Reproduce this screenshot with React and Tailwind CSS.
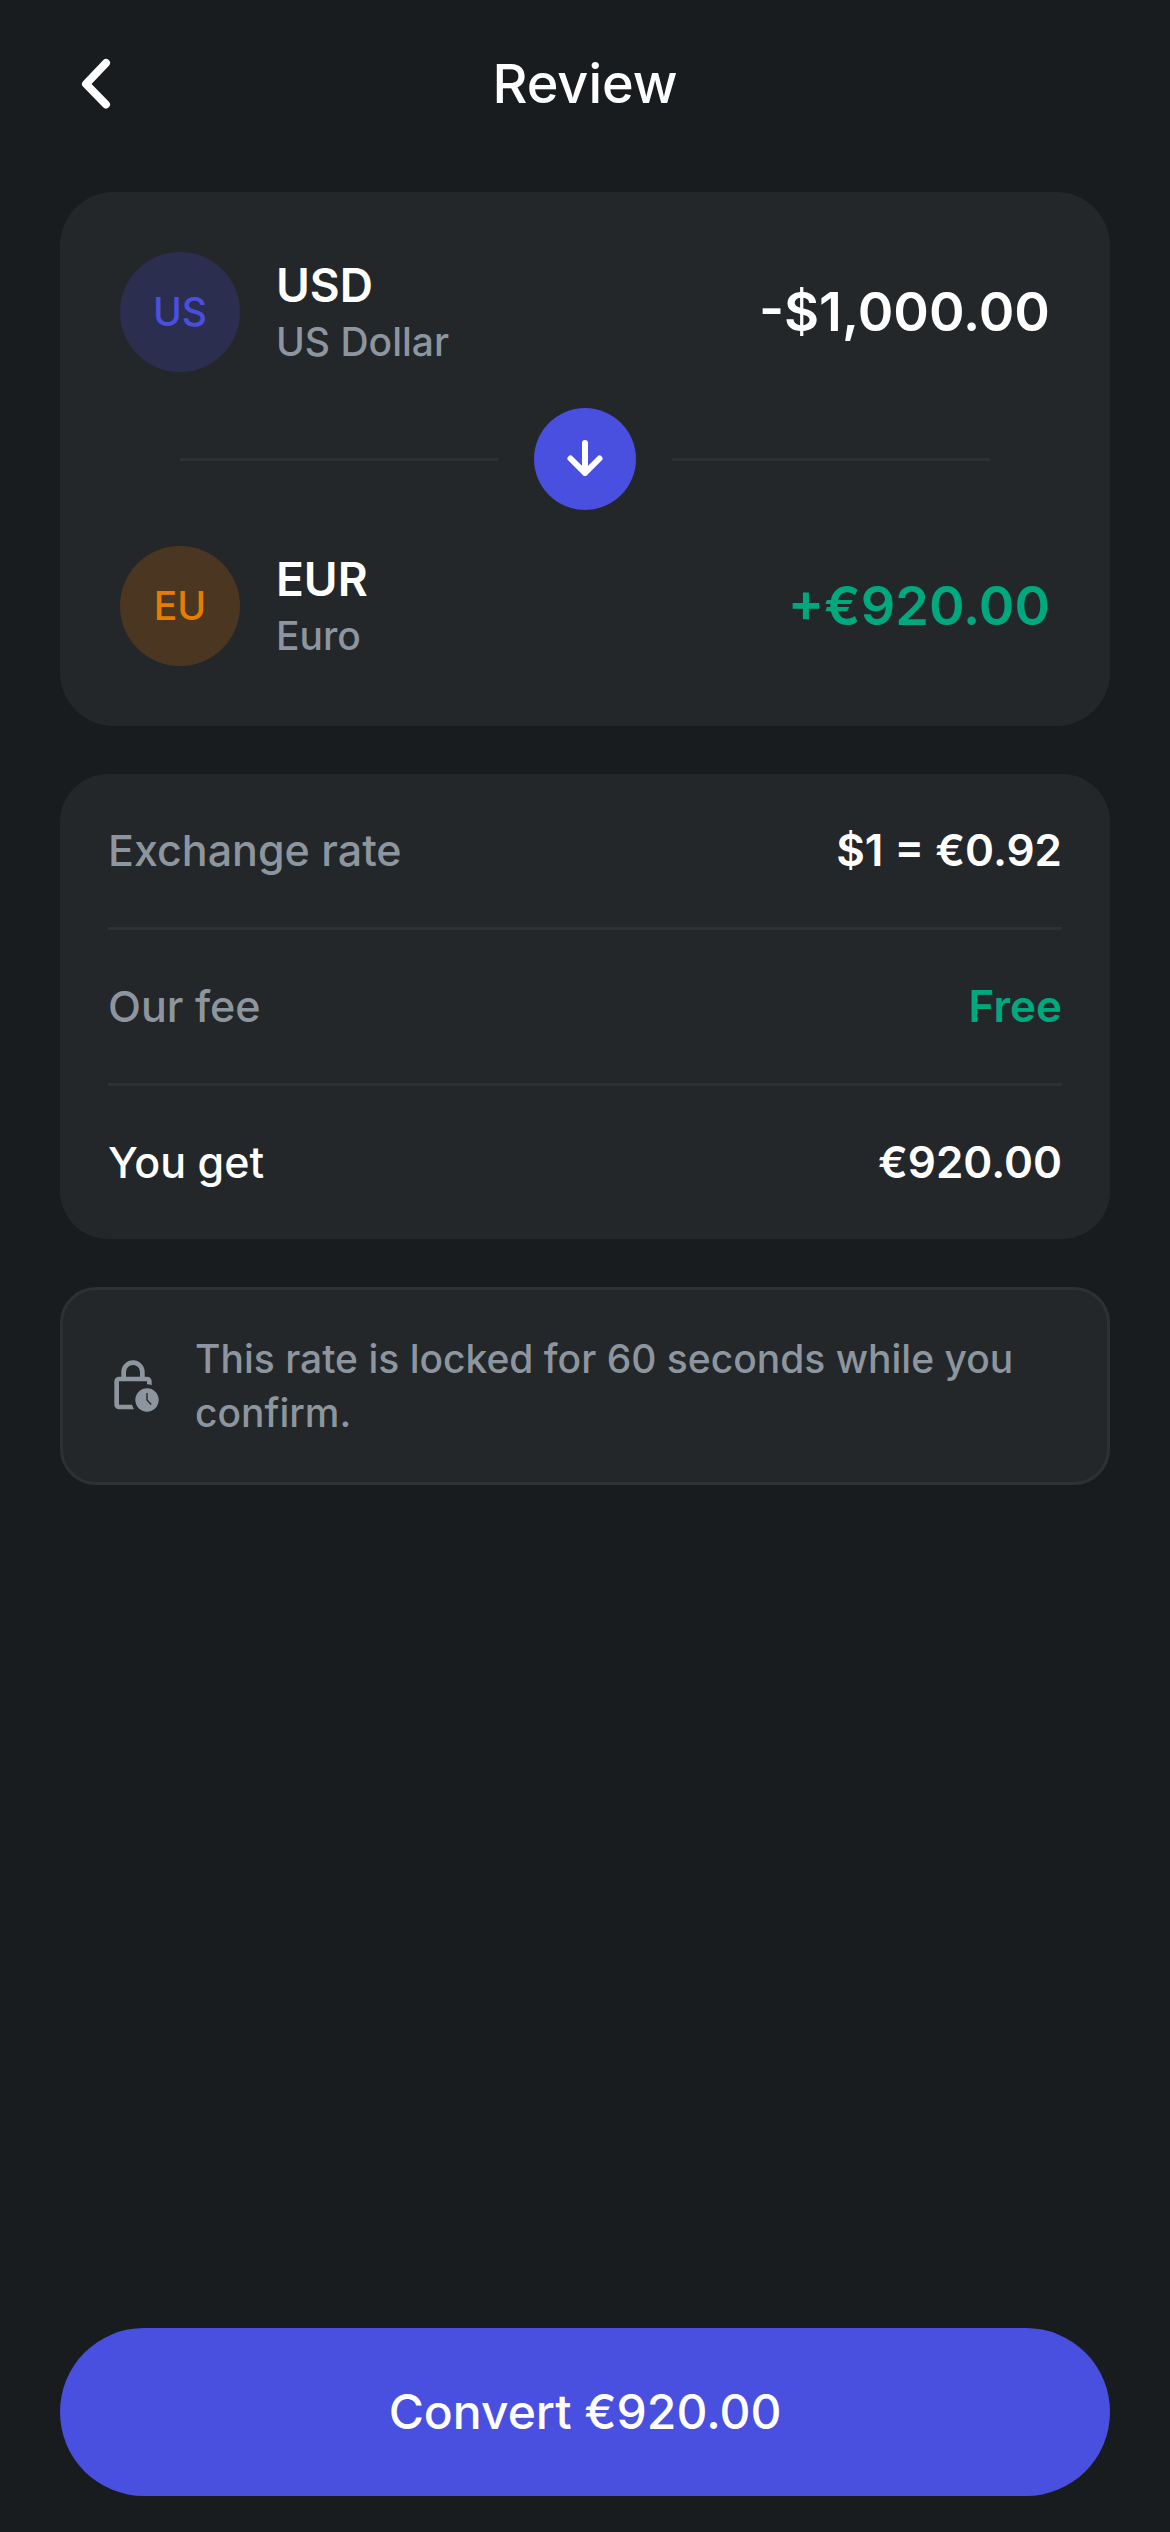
export default function App() {
  return (
    <div className="min-h-screen flex flex-col bg-[#191c1f] text-white font-medium px-[60px] pb-9 font-[Inter,sans-serif]">
      <header className="grid grid-cols-[72px_1fr_72px] items-center h-[168px]">
        <button type="button" aria-label="Back" className="size-[72px] flex items-center justify-center">
          <svg viewBox="0 0 72 72" className="size-[72px]" fill="none" stroke="currentColor" strokeWidth="8">
            <path d="M46 15 26 36l20 20.5" strokeLinecap="round" strokeLinejoin="round" />
          </svg>
        </button>
        <h1 className="text-center text-[54px] leading-[72px]">Review</h1>
      </header>

      <main className="flex flex-col gap-12 pt-6">
        <section className="bg-[#24272a] rounded-[54px] p-[60px]">
          <CurrencyRow
            badge="US"
            badgeClass="bg-[#2c2e4f] text-[#494fdf]"
            code="USD"
            name="US Dollar"
            amount="-$1,000.00"
          />
          <div className="flex items-center gap-9 px-[60px] py-9">
            <div className="h-[3px] flex-1 bg-[#2d3134]" />
            <div className="size-[102px] rounded-full bg-[#494fdf] flex items-center justify-center">
              <svg viewBox="0 0 48 48" className="size-12" fill="none" stroke="currentColor" strokeWidth="6">
                <path d="M24 8v30M9.5 23.5 24 38l14.500-14.500" strokeLinecap="round" strokeLinejoin="round" />
              </svg>
            </div>
            <div className="h-[3px] flex-1 bg-[#2d3134]" />
          </div>
          <CurrencyRow
            badge="EU"
            badgeClass="bg-[#4b3721] text-[#e67c00]"
            code="EUR"
            name="Euro"
            amount="+€920.00"
            amountClass="text-[#00a87e]"
          />
        </section>

        <dl className="bg-[#24272a] rounded-[48px] px-12">
          <DetailRow label="Exchange rate" value="$1 = €0.92" />
          <DetailRow label="Our fee" value="Free" valueClass="text-[#00a87e]" />
          <DetailRow label="You get" value="€920.00" labelClass="text-white" />
        </dl>

        <div className="flex items-center gap-[34px] rounded-[36px] border-[3px] border-[#2d3134] bg-[#24272a] p-[42px]">
          <LockClockIcon />
          <p className="flex-1 text-[39px] leading-[54px] text-[#8d969e]">
            This rate is locked for 60 seconds while you confirm.
          </p>
        </div>
      </main>

      <button type="button" className="mt-auto h-[168px] rounded-full bg-[#494fdf] text-[48px]">
        Convert €920.00
      </button>
    </div>
  )
}

function CurrencyRow({ badge, badgeClass, code, name, amount, amountClass = '' }) {
  return (
    <div className="flex items-center gap-9">
      <div className={`size-[120px] rounded-full flex items-center justify-center text-[39px] ${badgeClass}`}>
        {badge}
      </div>
      <div className="flex-1">
        <div className="text-[46px] leading-[60px] font-semibold">{code}</div>
        <div className="text-[39px] leading-[54px] text-[#8d969e]">{name}</div>
      </div>
      <div className={`text-[54px] leading-[72px] font-semibold ${amountClass}`}>{amount}</div>
    </div>
  )
}

function DetailRow({ label, value, labelClass = 'text-[#8d969e]', valueClass = '' }) {
  return (
    <div className="flex items-center justify-between py-[45px] leading-[63px] border-b-[3px] border-[#2d3134] last:border-b-0">
      <dt className={`text-[43px] ${labelClass}`}>{label}</dt>
      <dd className={`text-[44px] font-semibold ${valueClass}`}>{value}</dd>
    </div>
  )
}

function LockClockIcon() {
  return (
    <svg viewBox="0 0 24 24" className="size-14 text-[#8d969e]" fill="currentColor">
      <path d="M6 22q-.825 0-1.412-.587T4 20V10q0-.825.588-1.412T6 8h1V6q0-2.075 1.463-3.537T12 1t3.538 1.463T17 6v2h1q.825 0 1.413.588T20 10v1.7q-.45-.2-.95-.3T18 11.3V10H6v10h5.6q.1.55.35 1.05t.5.95zM9 8h6V6q0-1.25-.875-2.125T12 3t-2.125.875T9 6z" />
      <circle cx="18" cy="18" r="5" />
      <path d="M18 15v3l1.8 1.9" fill="none" stroke="#24272a" strokeWidth=".6" />
    </svg>
  )
}
